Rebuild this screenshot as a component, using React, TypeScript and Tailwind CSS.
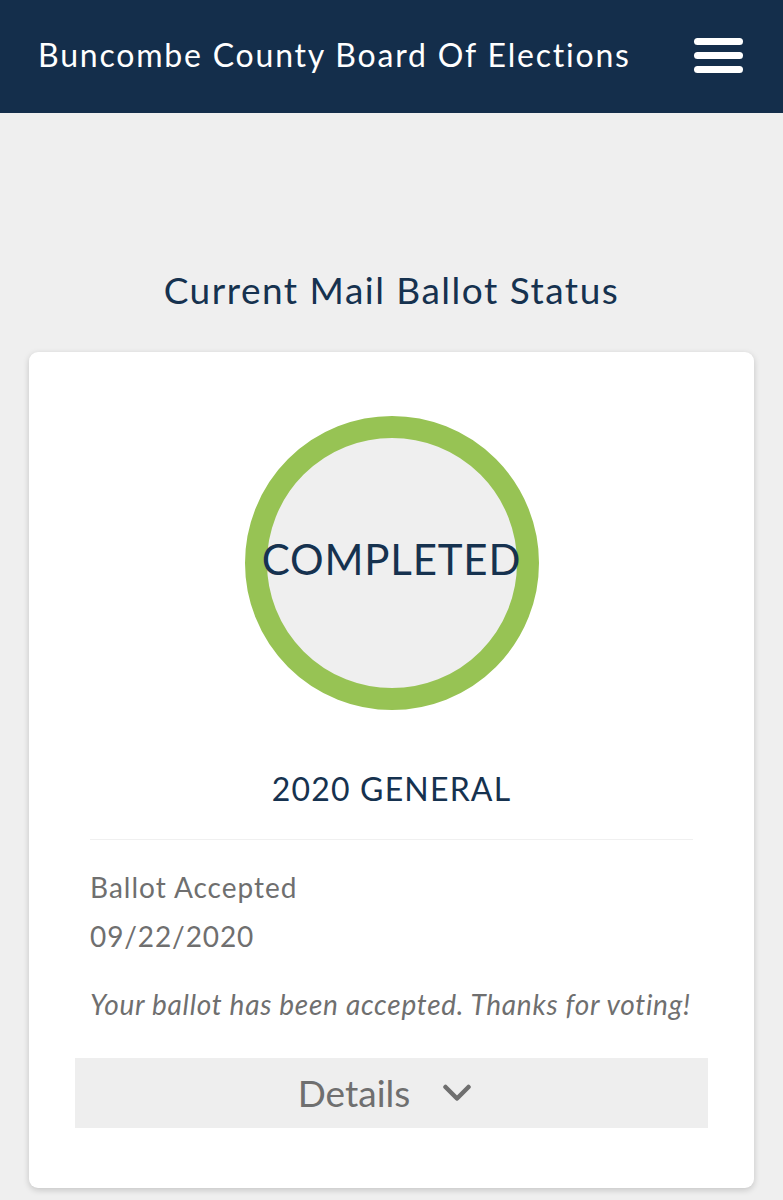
import React from "react";

export default function App() {
  return (
    <div className="min-h-[1200px] bg-[#efefef]" style={{ fontFamily: "Lato, 'Open Sans', sans-serif" }}>
      <header className="h-[113px] bg-[#142e4b] flex items-center justify-between pl-[38px] pr-[40px]">
        <h1 className="text-white text-[32px] leading-none tracking-[1.8px] pb-[3px]">Buncombe County Board Of Elections</h1>
        <div className="flex flex-col gap-[7px] pb-[3px]">
          <span className="block w-[49px] h-[7px] rounded-full bg-white" />
          <span className="block w-[49px] h-[7px] rounded-full bg-white" />
          <span className="block w-[49px] h-[7px] rounded-full bg-white" />
        </div>
      </header>

      <div className="px-[29px] pb-[12px]">
        <h2 className="text-center text-[#16324f] text-[37px] leading-none tracking-[1.5px] pt-[158px] pb-[44px]">
          Current Mail Ballot Status
        </h2>

        <div className="bg-white rounded-[9px] shadow-[0_2px_6px_rgba(0,0,0,0.18)] pt-[64px] pb-[60px] px-[46px]">
          <div className="flex justify-center">
            <div className="w-[294px] h-[294px] rounded-full border-[22px] border-[#97c354] bg-[#efefef] flex items-center justify-center">
              <span className="text-[#16324f] text-[42px] leading-none tracking-[0.8px] whitespace-nowrap pb-[8px]">COMPLETED</span>
            </div>
          </div>
          <div className="text-center text-[#16324f] text-[32px] leading-none tracking-[1.2px] mt-[63px]">2020 GENERAL</div>
          <div className="mx-[15px] mt-[34px] border-t border-[#f0f0f0]" />
          <div className="px-[15px] pt-[33px] text-[#6f6f6f]">
            <div className="text-[28px] leading-none tracking-[1px]">Ballot Accepted</div>
            <div className="text-[28px] leading-none tracking-[0.9px] mt-[21px]">09/22/2020</div>
            <div className="text-[28px] leading-none tracking-[0.72px] italic whitespace-nowrap mt-[40px]">Your ballot has been accepted. Thanks for voting!</div>
          </div>
          <div className="mt-[40px] h-[70px] bg-[#eeeeee] flex items-center justify-center gap-[33px] pr-[14px] text-[#6f6f6f]">
            <span className="text-[37px] leading-none pb-[2px]">Details</span>
            <svg width="28" height="18" viewBox="0 0 28 18" fill="none">
              <path d="M2.5 3 L14 14.5 L25.5 3" stroke="#6f6f6f" strokeWidth="4.5" strokeLinecap="round" strokeLinejoin="round" />
            </svg>
          </div>
        </div>
      </div>
    </div>
  );
}
